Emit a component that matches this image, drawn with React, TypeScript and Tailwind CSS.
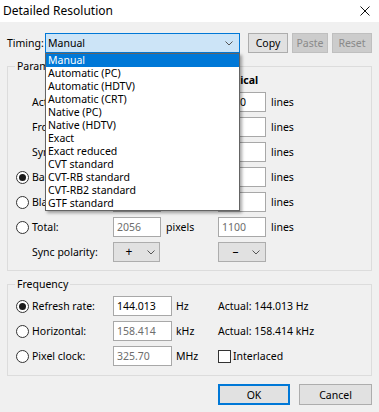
import React from "react";

const timings = [
  "Manual",
  "Automatic (PC)",
  "Automatic (HDTV)",
  "Automatic (CRT)",
  "Native (PC)",
  "Native (HDTV)",
  "Exact",
  "Exact reduced",
  "CVT standard",
  "CVT-RB standard",
  "CVT-RB2 standard",
  "GTF standard",
];

const params = [
  { label: "Active:", h: "1920", v: "1080" },
  { label: "Front porch:", h: "48", v: "3" },
  { label: "Sync width:", h: "32", v: "5" },
  { label: "Back porch:", h: "56", v: "12", radio: true, checked: true },
  { label: "Blanking:", h: "136", v: "20", radio: true, dim: true },
  { label: "Total:", h: "2056", v: "1100", radio: true, dim: true },
];

function Chevron() {
  return (
    <svg width="8" height="5" viewBox="0 0 8 5" className="shrink-0">
      <path d="M0.5 0.5 L4 4 L7.5 0.5" fill="none" stroke="#555" strokeWidth="1" />
    </svg>
  );
}

function Radio({ checked }: { checked?: boolean }) {
  return (
    <span className="mr-[3px] flex h-[13px] w-[13px] shrink-0 items-center justify-center rounded-full border border-[#333] bg-white">
      {checked && <span className="h-[7px] w-[7px] rounded-full bg-[#1a1a1a]" />}
    </span>
  );
}

function Box({ value, dim, w }: { value: string; dim?: boolean; w: string }) {
  return (
    <div
      className={`flex h-[20px] ${w} shrink-0 items-center border border-[#a8a8a8] bg-white pl-[3px] ${
        dim ? "text-[#6d6d6d]" : "text-black"
      }`}
    >
      {value}
    </div>
  );
}

function Btn({ children, disabled, primary, w }: { children: React.ReactNode; disabled?: boolean; primary?: boolean; w: string }) {
  let cls = "border-[#adadad] bg-[#e1e1e1] text-black";
  if (disabled) cls = "border-[#bfbfbf] bg-[#cccccc] text-[#8a8a8a]";
  if (primary) cls = "border-2 border-[#0078d7] bg-[#e1e1e1] text-black";
  return <div className={`flex h-full ${w} items-center justify-center border ${cls}`}>{children}</div>;
}

function LabelCell({ label, radio, checked }: { label: string; radio?: boolean; checked?: boolean }) {
  return (
    <div className={`flex w-[105px] shrink-0 items-center ${radio ? "pl-[8px]" : "pl-[24px]"}`}>
      {radio && <Radio checked={checked} />}
      <span>{label}</span>
    </div>
  );
}

export default function App() {
  return (
    <div className="h-[412px] w-[379px] overflow-hidden bg-[#f0f0f0] font-['Segoe_UI','Noto_Sans',sans-serif] text-[10.5px] leading-[14px] text-black">
      <div className="flex h-[22px] items-center justify-between bg-white pl-[3px] pr-[9px]">
        <span className="text-[12px]">Detailed Resolution</span>
        <svg width="10" height="10" viewBox="0 0 10 10">
          <path d="M0.5 0.5 L9.5 9.5 M9.5 0.5 L0.5 9.5" stroke="#111" strokeWidth="1" />
        </svg>
      </div>

      <div className="px-[7px]">
        <div className="mt-[11px] flex h-[20px] items-center">
          <span className="w-[38px] shrink-0">Timing:</span>
          <div className="relative h-full w-[195px] shrink-0">
            <div className="flex h-full items-center justify-between border border-[#0078d7] bg-[#cce4f7] pl-[2px] pr-[6px]">
              <span>Manual</span>
              <Chevron />
            </div>
            <div className="absolute left-0 top-full z-10 w-[195px] border border-[#646464] bg-white shadow-[2px_2px_3px_rgba(0,0,0,0.35)]">
              {timings.map((t, i) => (
                <div
                  key={t}
                  className={`h-[13px] pl-[2px] leading-[13px] ${i === 0 ? "bg-[#0078d7] text-white" : ""}`}
                >
                  {t}
                </div>
              ))}
            </div>
          </div>
          <div className="ml-[8px] flex h-full gap-[4px]">
            <Btn w="w-[40px]">Copy</Btn>
            <Btn w="w-[36px]" disabled>
              Paste
            </Btn>
            <Btn w="w-[40px]" disabled>
              Reset
            </Btn>
          </div>
        </div>

        <fieldset className="mt-[6px] border border-[#dcdcdc] pb-[8px]">
          <legend className="ml-[7px] px-[2px]">Parameters</legend>
          <div className="flex h-[13px] items-center font-bold">
            <span className="w-[105px] shrink-0" />
            <span className="w-[105px] shrink-0">Horizontal</span>
            <span>Vertical</span>
          </div>
          <div className="mt-[6px] flex flex-col gap-[5px]">
            {params.map((p) => (
              <div key={p.label} className="flex h-[20px] items-center">
                <LabelCell label={p.label} radio={p.radio} checked={p.checked} />
                <Box value={p.h} dim={p.dim} w="w-[48px]" />
                <span className="w-[57px] shrink-0 pl-[5px]">pixels</span>
                <Box value={p.v} dim={p.dim} w="w-[48px]" />
                <span className="pl-[5px]">lines</span>
              </div>
            ))}
            <div className="flex h-[20px] items-center">
              <LabelCell label="Sync polarity:" />
              <div className="flex h-full w-[47px] shrink-0 items-center border border-[#adadad] bg-[#e1e1e1] pr-[4px]">
                <span className="w-[30px] text-center text-[12px]">+</span>
                <span className="ml-auto">
                  <Chevron />
                </span>
              </div>
              <span className="w-[58px] shrink-0" />
              <div className="flex h-full w-[48px] shrink-0 items-center border border-[#adadad] bg-[#e1e1e1] pr-[5px]">
                <span className="w-[38px] text-center text-[12px]">–</span>
                <span className="ml-auto">
                  <Chevron />
                </span>
              </div>
            </div>
          </div>
        </fieldset>

        <fieldset className="mt-[6px] border border-[#dcdcdc] pb-[9px]">
          <legend className="ml-[7px] px-[2px]">Frequency</legend>
          <div className="mt-[5px] flex flex-col gap-[5px]">
            <div className="flex h-[20px] items-center">
              <LabelCell label="Refresh rate:" radio checked />
              <Box value="144.013" w="w-[59px]" />
              <span className="w-[46px] shrink-0 pl-[4px]">Hz</span>
              <span>Actual: 144.013 Hz</span>
            </div>
            <div className="flex h-[20px] items-center">
              <LabelCell label="Horizontal:" radio />
              <Box value="158.414" dim w="w-[59px]" />
              <span className="w-[46px] shrink-0 pl-[4px]">kHz</span>
              <span>Actual: 158.414 kHz</span>
            </div>
            <div className="flex h-[20px] items-center">
              <LabelCell label="Pixel clock:" radio />
              <Box value="325.70" dim w="w-[59px]" />
              <span className="w-[46px] shrink-0 pl-[4px]">MHz</span>
              <span className="h-[13px] w-[13px] shrink-0 border border-[#333] bg-white" />
              <span className="ml-[2px]">Interlaced</span>
            </div>
          </div>
        </fieldset>

        <div className="mt-[8px] flex h-[21px] justify-end gap-[9px]">
          <Btn w="w-[72px]" primary>
            OK
          </Btn>
          <Btn w="w-[73px]">Cancel</Btn>
        </div>
      </div>
    </div>
  );
}
